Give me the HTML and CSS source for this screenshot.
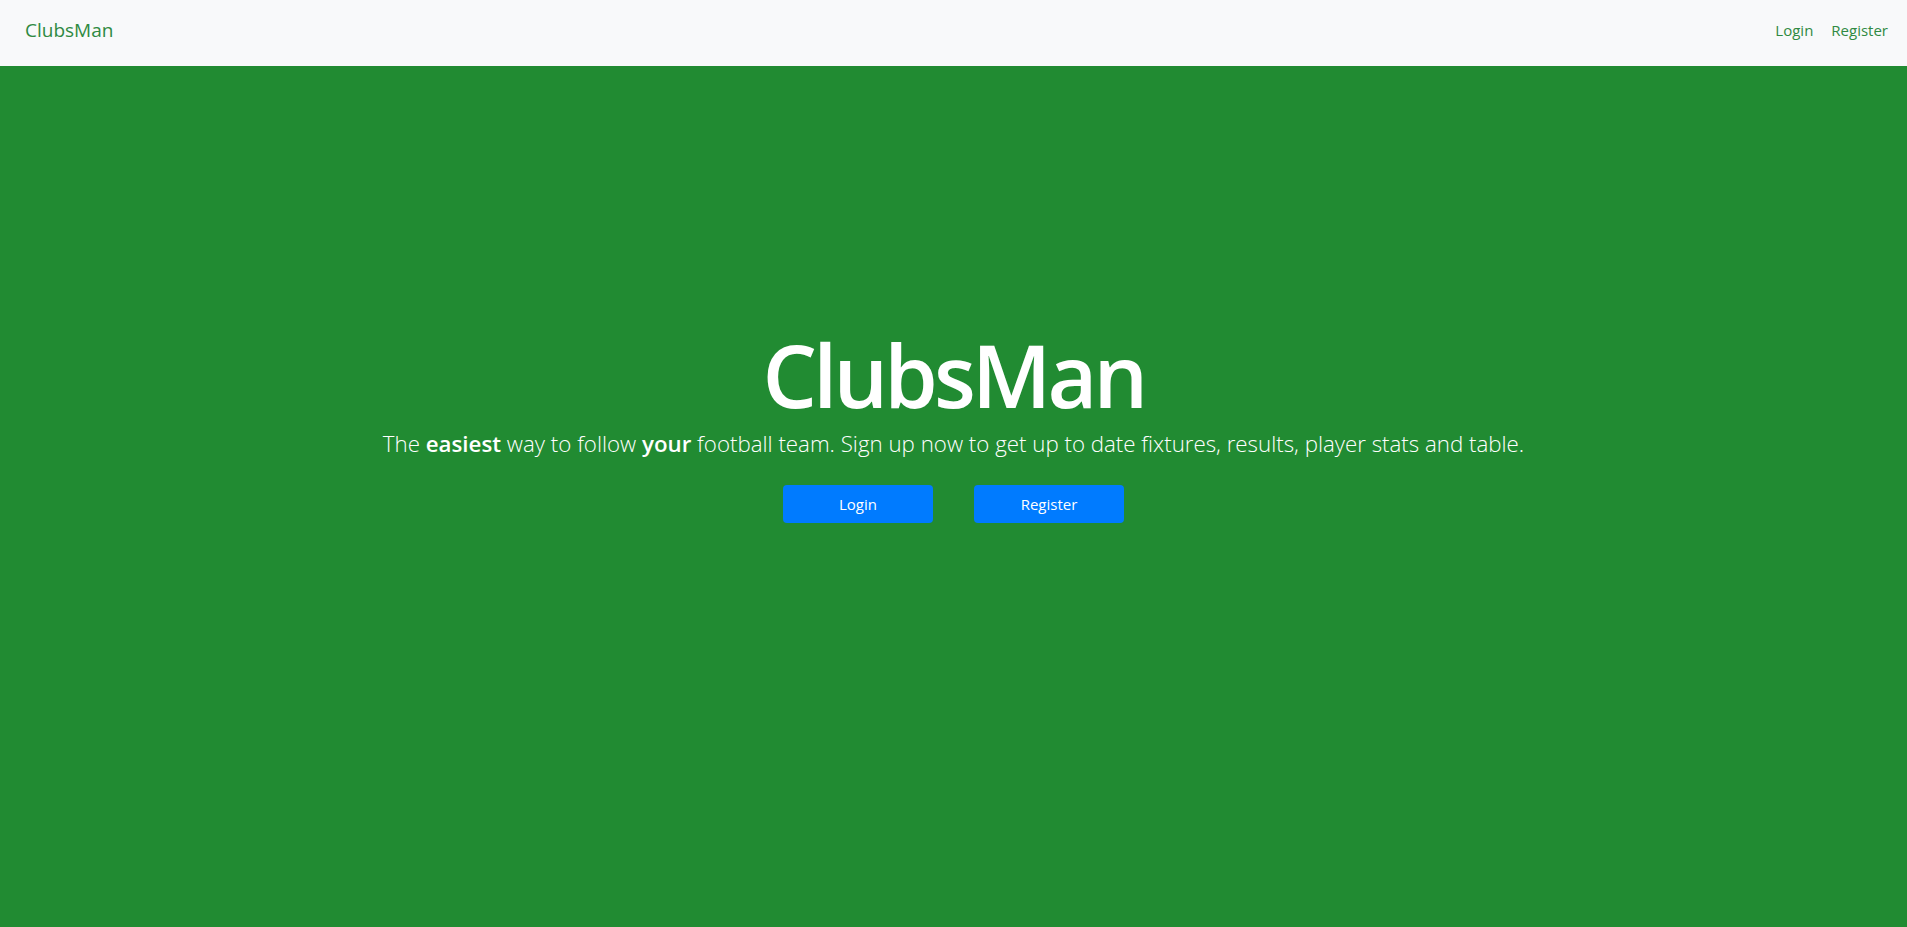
FILE: index.html
```html
<!DOCTYPE html>
<html lang="en">
<head>
<meta charset="utf-8">
<title>ClubsMan</title>
<link rel="stylesheet" href="styles.css">
</head>
<body>
<nav class="navbar">
  <a class="brand" href="#">ClubsMan</a>
  <div class="nav-links">
    <a class="nav-link" href="#">Login</a>
    <a class="nav-link" href="#">Register</a>
  </div>
</nav>
<main class="hero">
  <h1 class="hero-title">ClubsMan</h1>
  <p class="hero-lead">The <strong>easiest</strong> way to follow <strong>your</strong> football team. Sign up now to get up to date fixtures, results, player stats and table.</p>
  <div class="hero-actions">
    <a class="btn" href="#">Login</a>
    <a class="btn" href="#">Register</a>
  </div>
</main>
</body>
</html>
```
FILE: styles.css
```css
* { box-sizing: border-box; }
html, body { margin: 0; height: 100%; }
body {
  font-family: "Open Sans", "Noto Sans", sans-serif;
  background: #218b32;
  display: flex;
  flex-direction: column;
}
a { text-decoration: none; }
.navbar {
  height: 66px;
  flex: none;
  background: #f8f9fa;
  display: flex;
  align-items: flex-start;
  justify-content: space-between;
  padding: 15px 19px 0 25px;
}
.brand {
  color: #2f8a42;
  font-size: 19px;
  line-height: 30px;
}
.nav-links { display: flex; gap: 18px; padding-top: 3px; }
.nav-link {
  color: #2f8a42;
  font-size: 15px;
  line-height: 24px;
}
.hero {
  flex: 1;
  display: flex;
  flex-direction: column;
  align-items: center;
  padding-top: 266px;
  color: #fff;
}
.hero-title {
  margin: 0;
  font-size: 86px;
  font-weight: 600;
  line-height: 86px;
  letter-spacing: -3.8px;
}
.hero-lead {
  margin: 11px 0 0;
  font-size: 22.3px;
  font-weight: 300;
  line-height: 30px;
}
.hero-lead strong { font-weight: 600; }
.hero-actions {
  display: flex;
  gap: 41px;
  margin-top: 26px;
}
.btn {
  width: 150px;
  height: 38px;
  display: flex;
  align-items: center;
  justify-content: center;
  background: #007bff;
  color: #fff;
  border-radius: 4px;
  font-size: 15px;
}
```
